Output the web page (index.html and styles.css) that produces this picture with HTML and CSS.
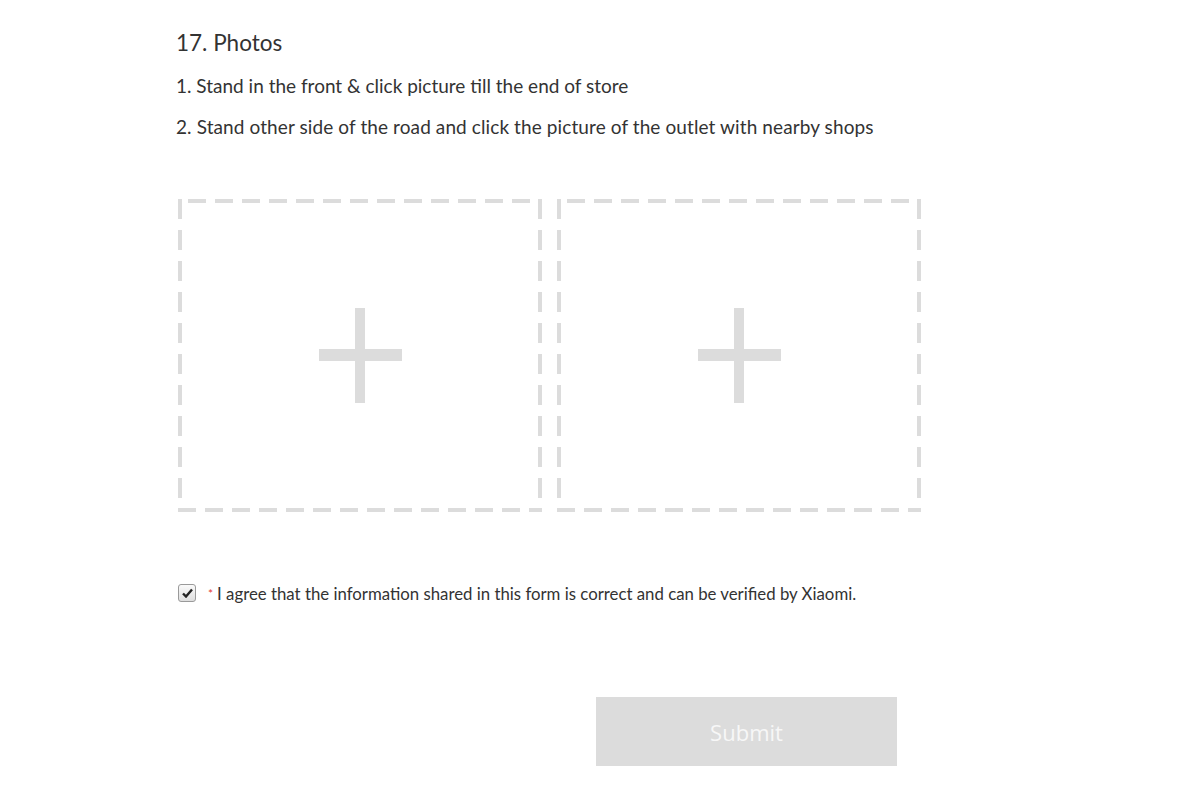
FILE: index.html
```html
<!DOCTYPE html>
<html lang="en">
<head>
  <meta charset="UTF-8" />
  <meta name="viewport" content="width=device-width, initial-scale=1.0"/>
  <title>Store Survey - Photos</title>
  <link rel="stylesheet" href="styles.css">
</head>
<body>
  <div class="form">
    <h2 class="q-title">17. Photos</h2>
    <p class="q-line">1. Stand in the front &amp; click picture till the end of store</p>
    <p class="q-line">2. Stand other side of the road and click the picture of the outlet with nearby shops</p>

    <div class="uploads">
      <label class="upload-box">
        <svg class="dash" width="364" height="313" viewBox="0 0 364 313">
          <line class="h" x1="10" y1="2" x2="364" y2="2"/>
          <line class="h" x1="0" y1="311" x2="364" y2="311"/>
          <line class="v" x1="2" y1="0" x2="2" y2="313"/>
          <line class="v" x1="362" y1="0" x2="362" y2="313"/>
        </svg>
        <span class="plus"></span>
      </label>
      <label class="upload-box">
        <svg class="dash" width="364" height="313" viewBox="0 0 364 313">
          <line class="h" x1="10" y1="2" x2="364" y2="2"/>
          <line class="h" x1="0" y1="311" x2="364" y2="311"/>
          <line class="v" x1="2" y1="0" x2="2" y2="313"/>
          <line class="v" x1="362" y1="0" x2="362" y2="313"/>
        </svg>
        <span class="plus"></span>
      </label>
    </div>

    <div class="agree">
      <span class="check">
        <svg width="11" height="10" viewBox="0 0 11 10"><path d="M1 5.5 L4 8.5 L10 1.5" fill="none" stroke="#222" stroke-width="2.4"/></svg>
      </span>
      <span class="req">*</span>
      <span class="agree-text">I agree that the information shared in this form is correct and can be verified by Xiaomi.</span>
    </div>

    <div class="actions">
      <button class="submit" disabled>Submit</button>
    </div>
  </div>
</body>
</html>
```

FILE: styles.css
```css
body { margin: 0; background: #fff; font-family: Lato, "Open Sans", sans-serif; color: #333; }
.form { margin-left: 176px; width: 745px; padding-top: 21px; }
.q-title { margin: 0; font-size: 22.5px; font-weight: normal; line-height: 44px; }
.q-line { margin: 0; font-size: 19px; line-height: 41px; }
.q-line:last-of-type { letter-spacing: 0.1px; }
.uploads { display: flex; gap: 15px; margin-top: 52px; margin-left: 2px; }
.upload-box { position: relative; width: 364px; height: 313px; cursor: pointer; display: flex; align-items: center; justify-content: center; }
.dash { position: absolute; left: 0; top: 0; }
.dash line { stroke: #dcdcdc; stroke-width: 4; }
.dash .h { stroke-dasharray: 18 9; }
.dash .v { stroke-dasharray: 20 11; }
.plus { position: relative; width: 83px; height: 95px; }
.plus::before { content: ""; position: absolute; left: 36px; top: 0; width: 10px; height: 95px; background: #dcdcdc; }
.plus::after { content: ""; position: absolute; left: 0; top: 41px; width: 83px; height: 12px; background: #dcdcdc; }
.agree { display: flex; align-items: center; height: 20px; margin-top: 71px; margin-left: 2px; font-size: 16.8px; }
.check { width: 16px; height: 16px; border: 1px solid #9a9a9a; border-radius: 3px; background: linear-gradient(#fafafa, #dedede); display: flex; align-items: center; justify-content: center; }
.req { color: #e53935; margin-left: 12px; margin-right: 4px; font-size: 12px; }
.actions { margin-top: 94px; margin-left: 420px; }
.submit { width: 301px; height: 69px; border: none; background: #dcdcdc; color: #f7f7f7; font-family: "Open Sans", sans-serif; font-size: 22px; }
```
